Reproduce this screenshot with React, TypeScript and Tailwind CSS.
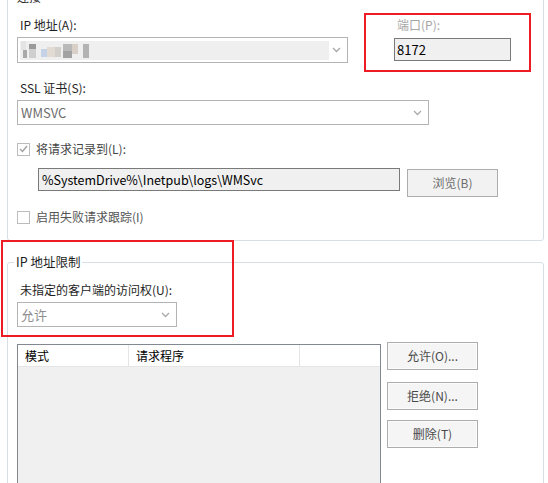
import React from "react";

function Chevron() {
  return (
    <svg width="9" height="6" viewBox="0 0 9 6" className="shrink-0">
      <polyline points="1,1 4.5,4.5 8,1" fill="none" stroke="#a9a9a9" strokeWidth="1.3" />
    </svg>
  );
}

function CheckBox({ checked }: { checked?: boolean }) {
  return (
    <span className="grid h-[13px] w-[13px] shrink-0 place-items-center border border-[#bcbcbc] bg-white">
      {checked && (
        <svg width="9" height="8" viewBox="0 0 9 8">
          <polyline points="1,4 3.5,6.5 8,1" fill="none" stroke="#a3a3a3" strokeWidth="1.5" />
        </svg>
      )}
    </span>
  );
}

// blurred-out host name in the IP address dropdown
function BlurredText() {
  const blocks = [
    { x: 1, y: 0, w: 5, h: 9, c: "#e4e4e4" },
    { x: 3, y: 9, w: 4, h: 8, c: "#a9a9a9" },
    { x: 9, y: 3, w: 7, h: 5, c: "#9a9a9a" },
    { x: 9, y: 8, w: 7, h: 9, c: "#cfcfcf" },
    { x: 21, y: 8, w: 6, h: 8, c: "#c6d3e6" },
    { x: 27, y: 6, w: 8, h: 10, c: "#e2dbd4" },
    { x: 35, y: 6, w: 6, h: 10, c: "#d3cfcb" },
    { x: 43, y: 3, w: 9, h: 7, c: "#b9b9b9" },
    { x: 43, y: 10, w: 9, h: 7, c: "#a2a2a2" },
    { x: 52, y: 3, w: 6, h: 10, c: "#d8cfc6" },
    { x: 63, y: 3, w: 6, h: 14, c: "#b3b3b3" },
  ];
  return (
    <svg width="80" height="19" viewBox="0 0 80 19">
      {blocks.map((b, i) => (
        <rect key={i} x={b.x} y={b.y} width={b.w} height={b.h} fill={b.c} />
      ))}
    </svg>
  );
}

export default function App() {
  return (
    <div className="relative h-[483px] w-[548px] overflow-hidden bg-white font-['Noto_Sans_CJK_SC',sans-serif] text-[12px] leading-4 text-[#1e1e1e]">
      {/* 连接 */}
      <div className="relative -mt-[3px] ml-[7px] h-[244px] w-[537px] rounded-[3px] border border-[#d5dfe5] px-[9px] pt-[15px]">
        <span className="absolute -top-[9px] left-[6px] bg-white px-[3px]">连接</span>

        <div className="flex items-start gap-[16px]">
          <div className="w-[331px] pt-[4px]">
            <div className="pl-[3px]">IP 地址(A):</div>
            <div className="mt-[4px] flex h-[26px] items-center border border-[#b4b4b4] bg-white pl-[2px] pr-[6px]">
              <div className="h-[19px] w-[309px] bg-[#efefef]">
                <BlurredText />
              </div>
              <span className="ml-auto">
                <Chevron />
              </span>
            </div>
          </div>
          <div className="w-[167px] pt-[4px]">
            <div className="pl-[33px] text-[#a6a6a6]">端口(P):</div>
            <div className="ml-[30px] mt-[5px] flex h-[23px] w-[117px] items-center border border-[#7a7a7a] bg-[#f0f0f0] pl-[2px] text-[13px] text-black">
              8172
            </div>
          </div>
        </div>

        <div className="mt-[17px] pl-[3px]">SSL 证书(S):</div>
        <div className="mt-[4px] flex h-[25px] w-[412px] items-center justify-between border border-[#b4b4b4] bg-white pl-[3px] pr-[6px] text-[13px] text-[#6d6d6d]">
          WMSVC
          <Chevron />
        </div>

        <div className="mt-[16px] flex h-4 items-center gap-[6px] text-[#454545]">
          <CheckBox checked />
          <span>将请求记录到(L):</span>
        </div>

        <div className="ml-[21px] mt-[11px] flex items-start gap-[7px]">
          <div className="flex h-[23px] w-[362px] items-center border border-[#7a7a7a] bg-[#f0f0f0] pl-[3px] text-[12.5px] text-black">
            %SystemDrive%\Inetpub\logs\WMSvc
          </div>
          <button className="mt-[1px] h-[28px] w-[91px] border border-[#adadad] bg-[#f2f2f2] text-[#6d6d6d]">
            浏览(B)
          </button>
        </div>

        <div className="mt-[12px] flex h-4 items-center gap-[6px] text-[#555555]">
          <CheckBox />
          <span>启用失败请求跟踪(I)</span>
        </div>
      </div>

      {/* IP 地址限制 */}
      <div className="relative ml-[7px] mt-[21px] h-[240px] w-[537px] rounded-[3px] border border-[#d5dfe5] px-[9px] pt-[19px]">
        <span className="absolute -top-[9px] left-[6px] bg-white px-[2px] text-[12.5px]">IP 地址限制</span>

        <div className="pl-[3px]">未指定的客户端的访问权(U):</div>
        <div className="mt-[4px] flex h-[25px] w-[160px] items-center justify-between border border-[#b4b4b4] bg-white pl-[3px] pr-[6px] text-[13px] text-[#8e8e8e]">
          允许
          <Chevron />
        </div>

        <div className="mt-[15px] flex items-start gap-[6px]">
          <div className="mt-[2px] h-[160px] w-[364px] border border-[#828790] bg-[#f0f0f0]">
            <div className="flex h-[22px] bg-white">
              <div className="flex w-[111px] items-center border-b border-r border-[#e5e5e5] pl-[7px] text-black">
                模式
              </div>
              <div className="flex w-[171px] items-center border-b border-r border-[#e5e5e5] pl-[7px] text-black">
                请求程序
              </div>
              <div className="flex-1 border-b border-[#e5e5e5]" />
            </div>
          </div>

          <div className="flex flex-col">
            <button className="h-[28px] w-[91px] border border-[#adadad] bg-[#f5f5f5] text-[#4a4a4a] shadow-[inset_0_0_0_1px_#fcfcfc]">
              允许(O)...
            </button>
            <button className="mt-[12px] h-[28px] w-[91px] border border-[#adadad] bg-[#f5f5f5] text-[#4a4a4a] shadow-[inset_0_0_0_1px_#fcfcfc]">
              拒绝(N)...
            </button>
            <button className="mt-[10px] h-[28px] w-[91px] border border-[#adadad] bg-[#f5f5f5] text-[#4a4a4a] shadow-[inset_0_0_0_1px_#fcfcfc]">
              删除(T)
            </button>
          </div>
        </div>
      </div>

      {/* red annotation frames */}
      <div className="pointer-events-none absolute left-[364px] top-[13px] h-[59px] w-[167px] border-2 border-[#ed1c24]" />
      <div className="pointer-events-none absolute left-[1px] top-[240px] h-[97px] w-[233px] border-2 border-[#ed1c24]" />
    </div>
  );
}
